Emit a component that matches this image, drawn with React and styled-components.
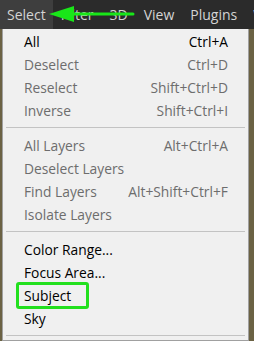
import React from "react";
import styled, { createGlobalStyle } from "styled-components";

const Global = createGlobalStyle`
  html, body { margin: 0; padding: 0; background: #2b2b2b; }
  body { width: 254px; height: 341px; overflow: hidden; font-family: "Open Sans", "Noto Sans", sans-serif; }
`;

const Screen = styled.div`
  width: 254px;
  height: 341px;
  display: flex;
  flex-direction: column;
  background: #6b6244;
  position: relative;
  overflow: hidden;
`;

const MenuBar = styled.div`
  height: 29px;
  flex: none;
  display: flex;
  align-items: center;
  background: #2b2b2b;
  white-space: nowrap;
`;

const BarItem = styled.div`
  height: 100%;
  flex: none;
  display: flex;
  align-items: center;
  padding: 0 ${(p) => (p.$active ? 7 : 8)}px;
  color: #d4d4d4;
  font-size: 14px;
  background: ${(p) => (p.$active ? "#3e3e3e" : "transparent")};
`;

const Dropdown = styled.div`
  margin-left: 2px;
  width: 247px;
  flex: 1;
  background: #f0f0f0;
  border: 1px solid #a0a0a0;
  border-top: none;
  padding: 1px 0 0 0;
  display: flex;
  flex-direction: column;
  box-sizing: border-box;
`;

const Row = styled.div`
  height: 23px;
  flex: none;
  display: flex;
  align-items: center;
  justify-content: space-between;
  padding: 0 20px 0 21px;
  font-size: 13.8px;
  color: ${(p) => (p.$disabled ? "#6d6d6d" : "#000")};
  position: relative;
`;

const Sep = styled.div`
  height: 1px;
  background: #c3c3c3;
  margin: ${(p) => p.$m || "5px 3px 6px 3px"};
  flex: none;
`;

const Label = styled.span`
  position: relative;
`;

const Highlight = styled.span`
  position: absolute;
  left: -8px;
  top: -4px;
  width: 67px;
  height: 21px;
  border: 3px solid #22e01e;
  border-radius: 3px;
`;

const Arrow = styled.svg`
  position: absolute;
  left: 0;
  top: 0;
`;

const items1 = [
  ["All", "Ctrl+A", false],
  ["Deselect", "Ctrl+D", true],
  ["Reselect", "Shift+Ctrl+D", true],
  ["Inverse", "Shift+Ctrl+I", true],
];
const items2 = [
  ["All Layers", "Alt+Ctrl+A", true],
  ["Deselect Layers", "", true],
  ["Find Layers", "Alt+Shift+Ctrl+F", true],
  ["Isolate Layers", "", true],
];
const items3 = [
  ["Color Range...", "", false],
  ["Focus Area...", "", false],
  ["Subject", "", false, true],
  ["Sky", "", false],
];

const renderRows = (list) =>
  list.map(([l, s, d, h]) => (
    <Row key={l} $disabled={d}>
      <Label>
        {h && <Highlight />}
        {l}
      </Label>
      <span>{s}</span>
    </Row>
  ));

export default function App() {
  return (
    <>
      <Global />
      <Screen>
        <MenuBar>
          <BarItem $active>Select</BarItem>
          <BarItem>Filter</BarItem>
          <BarItem>3D</BarItem>
          <BarItem>View</BarItem>
          <BarItem>Plugins</BarItem>
          <BarItem>Window</BarItem>
        </MenuBar>
        <Dropdown>
          {renderRows(items1)}
          <Sep />
          {renderRows(items2)}
          <Sep />
          {renderRows(items3)}
          <Sep $m="5px 3px 0 3px" />
        </Dropdown>
        <Arrow width="254" height="30" viewBox="0 0 254 30">
          <line x1="66" y1="14" x2="133" y2="14" stroke="#19e619" strokeWidth="3" strokeLinecap="round" />
          <polygon points="49,14 74,6 74,22" fill="#19e619" />
        </Arrow>
      </Screen>
    </>
  );
}
